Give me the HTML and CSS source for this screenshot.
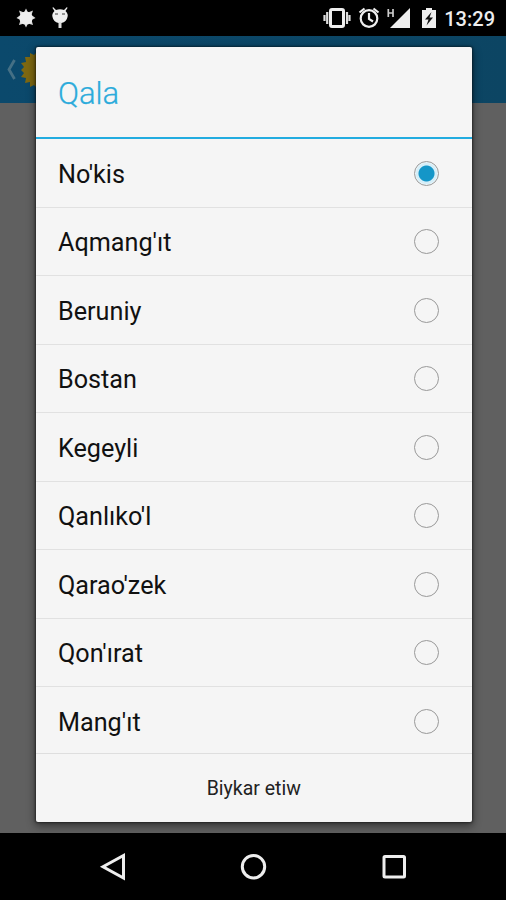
FILE: index.html
```html
<!DOCTYPE html>
<html lang="kaa">
<head>
<meta charset="utf-8">
<title>Qala</title>
<link rel="stylesheet" href="styles.css">
</head>
<body>
<div class="screen">
  <header class="status">
    <svg class="status-left" width="90" height="36" viewBox="0 0 90 36">
      <path fill="#ddd" d="M26 8.500l2 4 5-2-1.500 4.500 4 3-4 2 1.500 5-5-1.500-2 4-2-4-5 1.500 1.500-5-4-2 4-3-1.500-4.500 5 2z"/>
      <circle cx="26" cy="18" r="6.600" fill="#eee"/>
      <path fill="#eee" d="M53 7l3 3q4-1.700 8 0l3-3 .5 1-2 3q3 3 2 6-1 5-6 6h-3q-5-1-6-6-1-3 2-6l-2-3z"/>
      <path d="M60 22v6" stroke="#ddd" stroke-width="3"/>
      <path d="M55 14h3M62 14h3" stroke="#777" stroke-width="1.500"/>
    </svg>
    <div class="status-right">
      <svg width="124" height="36" viewBox="320 0 124 36">
        <rect x="330.500" y="9.500" width="13" height="17" rx="1.500" fill="none" stroke="#eee" stroke-width="3"/>
        <path d="M327.200 12v12M347 12v12M324.500 15v6M349.500 15v6" stroke="#ddd" stroke-width="2.200"/>
        <g fill="none" stroke="#eee" stroke-width="2.200"><circle cx="369" cy="18.500" r="8.300"/><path d="M369 13v6l4 2.500M359.500 12.500l5-4M378.500 12.500l-5-4"/></g>
        <path fill="#eee" d="M410 8v20h-20z"/>
        <path d="M388.300 9v8M393 9v8M388.300 13h5" stroke="#ccc" stroke-width="1.700" fill="none"/>
        <path fill="#eee" d="M422 10h4V8h6v2h4v18h-14z"/>
        <path fill="#111" d="M431.500 12l-6.500 7.500h3.500l-2 6 6.500-8h-3.500z"/>
      </svg>
      <span class="clock">13:29</span>
    </div>
  </header>
  <div class="appbar">
    <svg width="60" height="67" viewBox="0 36 60 67">
      <path d="M14.500 60L9 69.500l5.500 9.500" fill="none" stroke="#457085" stroke-width="2.800"/>
      <path fill="#7e6811" d="M38 51l-4 4-4-2v4l-5 0 1 5-5 1 3 4-3 3 3 3-3 4 5 1-1 5 5-1v5l4-2 4 4z"/>
    </svg>
  </div>
  <main class="content"></main>
  <nav class="nav">
    <svg width="506" height="67" viewBox="0 833 506 67" fill="none" stroke="#eee" stroke-width="3">
      <path d="M123.500 855.500v22.500l-20.500-11.300z"/>
      <circle cx="253.500" cy="866.700" r="11.200"/>
      <rect x="384" y="856.500" width="20.500" height="20.500" rx="1"/>
    </svg>
  </nav>
  <section class="dialog" role="dialog">
    <h1 class="title">Qala</h1>
    <ul class="list">
      <li class="row"><span>No'kis</span><i class="radio checked"></i></li>
      <li class="row"><span>Aqmang'ıt</span><i class="radio"></i></li>
      <li class="row"><span>Beruniy</span><i class="radio"></i></li>
      <li class="row"><span>Bostan</span><i class="radio"></i></li>
      <li class="row"><span>Kegeyli</span><i class="radio"></i></li>
      <li class="row"><span>Qanlıko'l</span><i class="radio"></i></li>
      <li class="row"><span>Qarao'zek</span><i class="radio"></i></li>
      <li class="row"><span>Qon'ırat</span><i class="radio"></i></li>
      <li class="row"><span>Mang'ıt</span><i class="radio"></i></li>
    </ul>
    <button class="cancel">Biykar etiw</button>
  </section>
</div>
</body>
</html>
```
FILE: styles.css
```css
* { box-sizing: border-box; }
body { margin: 0; font-family: Roboto, sans-serif; }
svg { display: block; }
.screen { position: relative; display: flex; flex-direction: column; width: 506px; height: 900px; overflow: hidden; background: #606060; }
.status { display: flex; justify-content: space-between; height: 36px; background: #000; }
.status-right { display: flex; align-items: center; padding-right: 11px; }
.clock { color: #eee; font-size: 20px; font-weight: 500; line-height: 36px; padding-top: 1px; }
.appbar { height: 67px; background: linear-gradient(90deg, #0b496c, #0c4563); }
.content { flex: 1; background: #606060; }
.nav { height: 67px; background: #000; }
.dialog { position: absolute; left: 36px; top: 47px; width: 435.500px; height: 774.500px; display: flex; flex-direction: column; background: #f5f5f5; border-radius: 2px; box-shadow: 0 0 2px 1px rgba(0,0,0,.4), 0 3px 9px 1px rgba(0,0,0,.45); }
.title { height: 92px; margin: 0; padding-left: 22px; border-bottom: 2px solid #22ace0; color: #2cabdb; font-size: 31px; font-weight: 300; -webkit-text-stroke: .25px #2cabdb; line-height: 94px; }
.list { height: 614px; margin: 0; padding: 0; overflow: hidden; list-style: none; }
.row { display: flex; align-items: center; justify-content: space-between; height: 68.500px; padding: 1px 32.500px 0 22px; border-bottom: 1px solid #e1e1e1; color: #111; font-size: 25.200px; }
.row span { padding-top: 2px; }
.radio { width: 25px; height: 25px; border: 1.500px solid #999; border-radius: 50%; }
.checked { background: radial-gradient(circle, #1496c8 0 7.500px, #d5eef8 8.500px 10px, #f2f8fa 11.500px); }
.cancel { flex: 1; border: 0; border-top: 1px solid #dedede; padding: 2px 0 0; background: transparent; color: #222; font: 400 19.500px Roboto, sans-serif; }
```
